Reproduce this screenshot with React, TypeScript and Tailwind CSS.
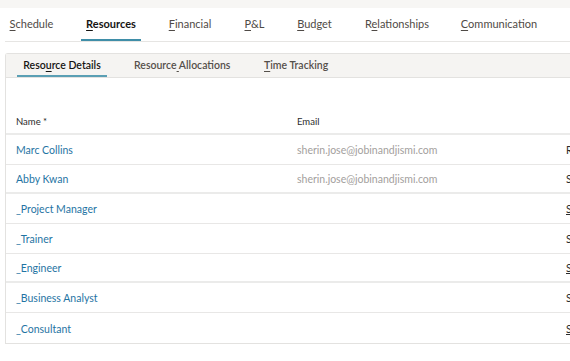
import React from "react";

const U = ({ c }: { c: string }) => (
  <span className="underline underline-offset-[2px] decoration-[1px]">{c}</span>
);

const mainTabs: { pre: string; u: string; post: string; w: number; ml: number; active?: boolean }[] = [
  { pre: "", u: "S", post: "chedule", w: 57, ml: 3 },
  { pre: "", u: "R", post: "esources", w: 60, ml: 21, active: true },
  { pre: "", u: "F", post: "inancial", w: 56, ml: 21 },
  { pre: "", u: "P", post: "&L", w: 33, ml: 20 },
  { pre: "", u: "B", post: "udget", w: 47, ml: 20 },
  { pre: "R", u: "e", post: "lationships", w: 76, ml: 21 },
  { pre: "", u: "C", post: "ommunication", w: 88, ml: 20 },
];

const rows: { name: string; email: string; third: string; ul?: boolean }[] = [
  { name: "Marc Collins", email: "sherin.jose@jobinandjismi.com", third: "Resource" },
  { name: "Abby Kwan", email: "sherin.jose@jobinandjismi.com", third: "Select" },
  { name: "_Project Manager", email: "", third: "Select", ul: true },
  { name: "_Trainer", email: "", third: "Select" },
  { name: "_Engineer", email: "", third: "Select", ul: true },
  { name: "_Business Analyst", email: "", third: "Select" },
  { name: "_Consultant", email: "", third: "Select", ul: true },
];

export default function App() {
  return (
    <div
      className="w-[570px] h-[361px] overflow-hidden bg-white text-[#333]"
      style={{ fontFamily: 'Lato, "Open Sans", sans-serif' }}
    >
      {/* top band */}
      <div className="h-[8px] bg-[#f7f6f4]" />

      {/* main tabs */}
      <div className="flex h-[33px]">
        {mainTabs.map((t, i) => (
          <div
            key={i}
            className={`relative flex items-center justify-center pb-[1px] text-[11px] ${
              t.active ? "font-bold text-[#161513]" : "text-[#4f4a46]"
            }`}
            style={{ width: t.w, marginLeft: t.ml }}
          >
            <span className="whitespace-nowrap">
              {t.pre}
              <U c={t.u} />
              {t.post}
            </span>
            {t.active && (
              <div className="absolute left-0 right-0 bottom-0 h-[2px] bg-[#3f8ea8]" />
            )}
          </div>
        ))}
      </div>
      <div className="ml-[5px] h-px bg-[#e6e5e3]" />

      {/* panel */}
      <div className="ml-[5px] mt-[11px] w-[620px] border-l border-t border-b border-[#e3e2e0] rounded-tl-[3px]">
        {/* sub tabs */}
        <div className="flex h-[24px] bg-[#f5f4f2] border-b border-[#e3e2e0]">
          <div className="relative ml-[11px] w-[90px] flex items-center justify-center text-[10.5px] font-semibold text-[#161513]">
            <span className="whitespace-nowrap">
              Reso<U c="u" />rce Details
            </span>
            <div className="absolute left-0 right-0 bottom-0 h-[2px] bg-[#5a9fb4]" />
          </div>
          <div className="ml-[27px] w-[96px] flex items-center text-[10.5px] font-semibold text-[#55504b]">
            <span className="whitespace-nowrap">
              Resource<U c=" " />Allocations
            </span>
          </div>
          <div className="ml-[34px] flex items-center text-[10.5px] font-semibold text-[#55504b]">
            <span className="whitespace-nowrap">
              <U c="T" />ime Tracking
            </span>
          </div>
        </div>

        {/* header */}
        <div className="flex items-end h-[57px] pb-[4px] border-b-2 border-[#ebebea] text-[9.5px] text-[#2b2b2b]">
          <div className="pl-[10px] w-[291px]">Name *</div>
          <div className="w-[269px]">Email</div>
        </div>

        {/* rows */}
        {rows.map((r, i) => (
          <div
            key={i}
            className={`flex items-center h-[29.7px] pt-[3px] text-[10.5px] ${
              i < rows.length - 1
                ? i === 1 || i === 4
                  ? "border-b-2 border-[#ebebea]"
                  : "border-b border-[#e8e7e6]"
                : ""
            }`}
          >
            <div className="pl-[10px] w-[291px] text-[#1f74a3] whitespace-nowrap">{r.name}</div>
            <div className="w-[269px] text-[#a3a09d] whitespace-nowrap">{r.email}</div>
            <div className={`text-[#2b2b2b] whitespace-nowrap ${r.ul ? "underline" : ""}`}>
              {r.third}
            </div>
          </div>
        ))}
      </div>
    </div>
  );
}
